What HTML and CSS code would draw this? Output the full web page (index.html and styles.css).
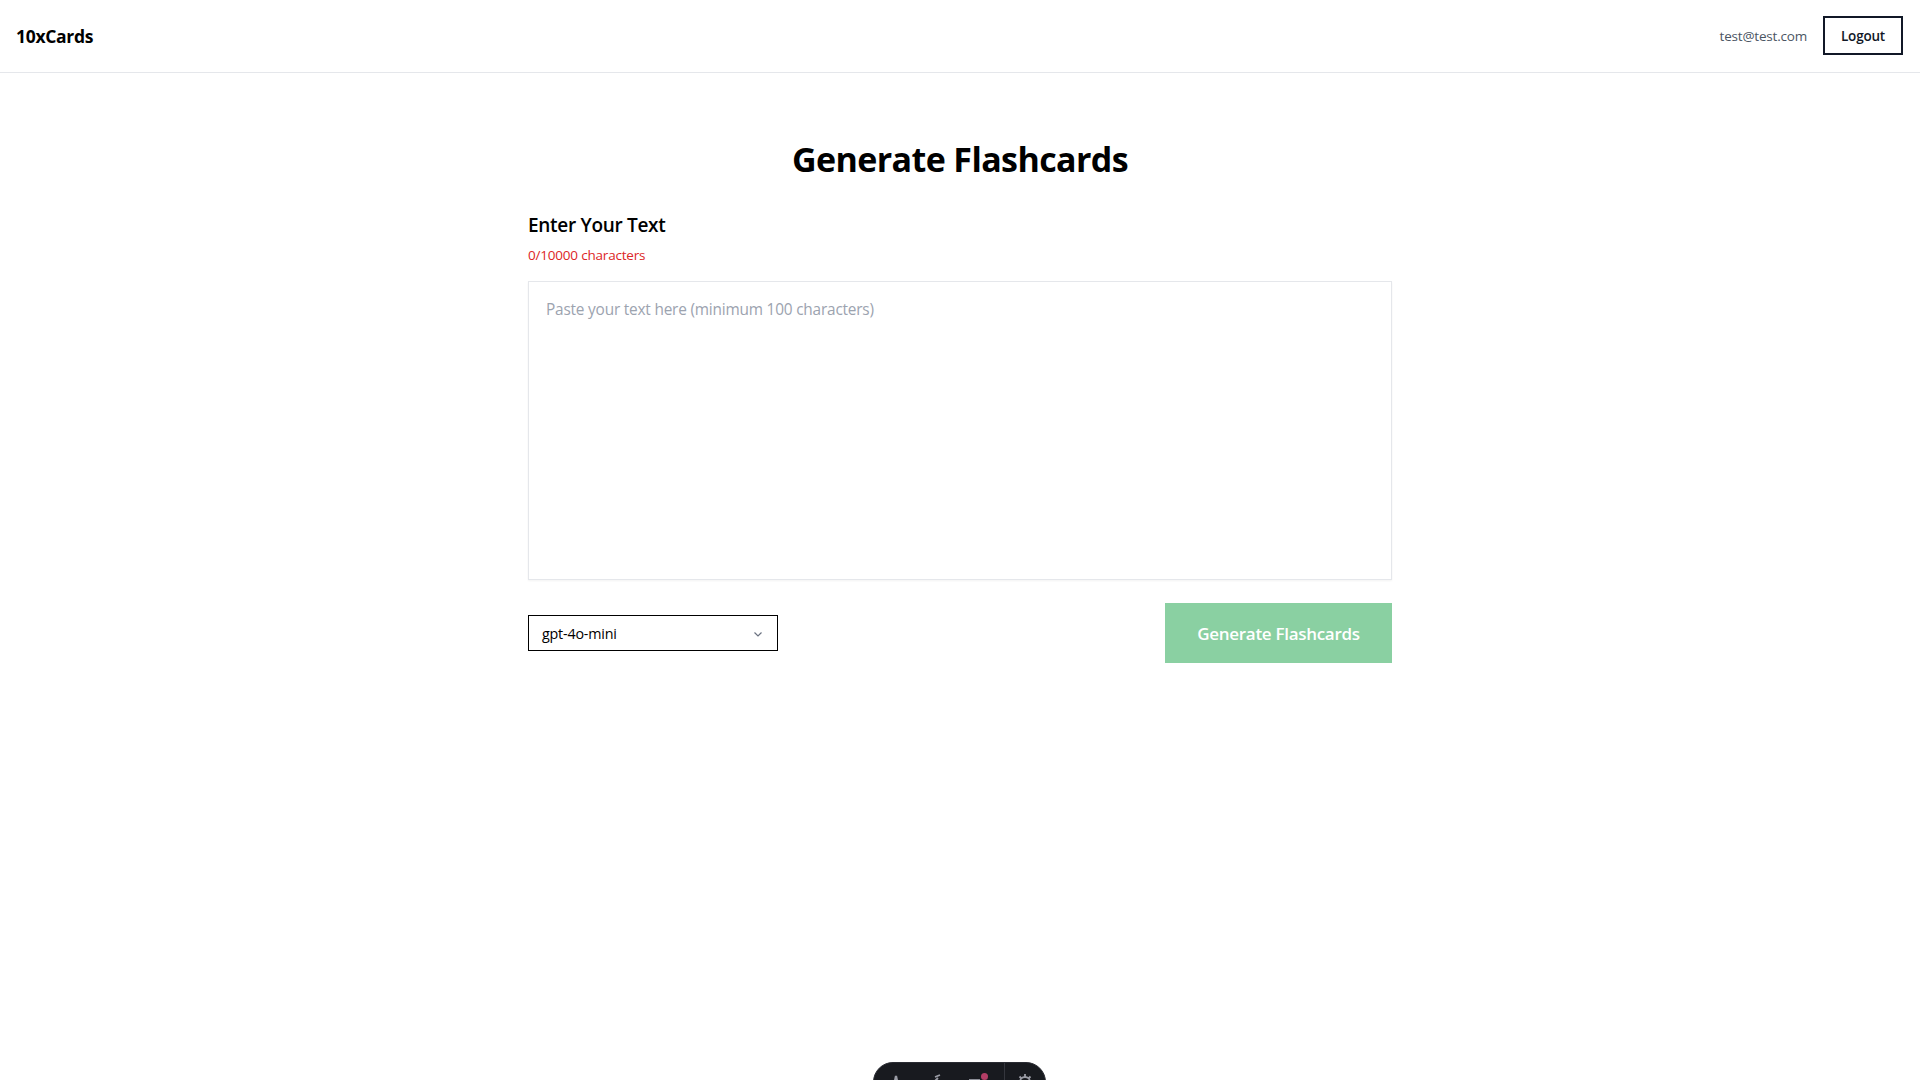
FILE: index.html
```html
<!DOCTYPE html>
<html lang="en">
<head>
<meta charset="utf-8">
<title>10xCards</title>
<link rel="stylesheet" href="styles.css">
</head>
<body>
<header class="topbar">
  <div class="brand">10xCards</div>
  <div class="user">
    <span class="email">test@test.com</span>
    <button class="logout">Logout</button>
  </div>
</header>
<main class="container">
  <h1 class="title">Generate Flashcards</h1>
  <section class="form">
    <h2 class="label">Enter Your Text</h2>
    <p class="count">0/10000 characters</p>
    <textarea class="input" placeholder="Paste your text here (minimum 100 characters)"></textarea>
    <div class="actions">
      <div class="select">
        <span>gpt-4o-mini</span>
        <svg class="chev" width="12" height="12" viewBox="0 0 12 12"><path d="M2.5 4.5 L6 8 L9.5 4.5" fill="none" stroke="#6b7280" stroke-width="1.2"/></svg>
      </div>
      <button class="generate">Generate Flashcards</button>
    </div>
  </section>
</main>
<div class="devbar">
  <div class="dev-group">
    <svg width="20" height="20" viewBox="0 0 20 20"><path d="M7 18 L10 4 L13 18" fill="none" stroke="#9a9ca5" stroke-width="2.2"/></svg>
    <svg width="20" height="20" viewBox="0 0 20 20"><path d="M4 14 L12 6 M9 5 L14 3" fill="none" stroke="#9a9ca5" stroke-width="1.8"/></svg>
    <span class="dot-wrap"><svg width="20" height="20" viewBox="0 0 20 20"><path d="M3 8 H14" fill="none" stroke="#9a9ca5" stroke-width="1.8"/></svg><i class="dot"></i></span>
  </div>
  <div class="dev-sep"></div>
  <div class="dev-group">
    <svg width="20" height="20" viewBox="0 0 20 20"><circle cx="10" cy="10" r="5" fill="none" stroke="#9a9ca5" stroke-width="1.8"/><path d="M10 2 V5 M4.5 4.5 L6.5 6.5 M15.5 4.5 L13.5 6.5" stroke="#9a9ca5" stroke-width="1.8"/></svg>
  </div>
</div>
</body>
</html>
```
FILE: styles.css
```css
* { box-sizing: border-box; }
html, body { margin: 0; padding: 0; background: #fff; }
body { font-family: "Open Sans", "Noto Sans", sans-serif; color: #0a0a0a; overflow: hidden; height: 1080px; }

.topbar {
  height: 73px;
  border-bottom: 1px solid #e5e7eb;
  display: flex;
  align-items: center;
  justify-content: space-between;
  padding: 0 17px 0 16px;
}
.brand { font-size: 17.5px; font-weight: 700; letter-spacing: -0.3px; color: #000; }
.user { display: flex; align-items: center; gap: 16px; }
.email { font-size: 13.5px; color: #4b5563; letter-spacing: -0.2px; }
.logout {
  width: 80px; height: 39px;
  border: 2px solid #111827;
  background: #fff;
  font-family: inherit;
  font-size: 13.5px;
  font-weight: 600;
  color: #111827;
  letter-spacing: -0.2px;
  padding: 0;
  margin-top: -1px;
}

.container { width: 864px; margin: 0 auto; padding-top: 62px; }
.title { margin: 0; text-align: center; font-size: 34px; font-weight: 700; line-height: 48px; letter-spacing: -0.6px; color: #000; }
.form { margin-top: 28px; }
.label { margin: 0; font-size: 19px; font-weight: 600; line-height: 28px; letter-spacing: -0.3px; color: #000; }
.count { margin: 6px 0 0; font-size: 13.5px; line-height: 20px; color: #dc2626; letter-spacing: -0.2px; }
.input {
  display: block;
  margin-top: 16px;
  width: 864px; height: 299px;
  border: 1px solid #e5e7eb;
  box-shadow: 0 1px 2px rgba(0,0,0,0.05);
  padding: 16px 17px;
  font-family: inherit;
  font-size: 15.4px;
  line-height: 24px;
  resize: none;
  outline: none;
  letter-spacing: -0.2px;
}
.input::placeholder { color: #9ca3af; }
.actions { margin-top: 23px; display: flex; align-items: center; justify-content: space-between; }
.select {
  width: 250px; height: 36px;
  border: 1.5px solid #000;
  display: flex; align-items: center; justify-content: space-between;
  padding: 0 13px 0 13px;
  font-size: 14.3px;
  letter-spacing: -0.2px;
  color: #000;
}
.chev { margin-top: 1px; }
.generate {
  width: 227px; height: 60px;
  border: none;
  background: #8ad0a2;
  color: #fff;
  font-family: inherit;
  font-size: 17px;
  font-weight: 600;
  letter-spacing: -0.3px;
  padding: 0;
}

.devbar {
  position: fixed;
  left: 873px;
  top: 1062px;
  width: 173px; height: 40px;
  background: #181a1f;
  border: 1px solid #2a2c33;
  border-radius: 20px;
  display: flex; align-items: flex-start;
  padding: 9px 10px 0 12px;
}
.dev-group { display: flex; gap: 20px; }
.dev-sep { width: 1px; height: 40px; margin-top: -9px; background: #34363d; margin-left: 18px; margin-right: 10px; }
.dot-wrap { position: relative; display: block; width: 20px; height: 20px; }
.dot-wrap svg { display: block; }
.dot { position: absolute; right: -2px; top: 1px; width: 7px; height: 7px; border-radius: 50%; background: #b33e66; }
.devbar svg { display: block; }
```
